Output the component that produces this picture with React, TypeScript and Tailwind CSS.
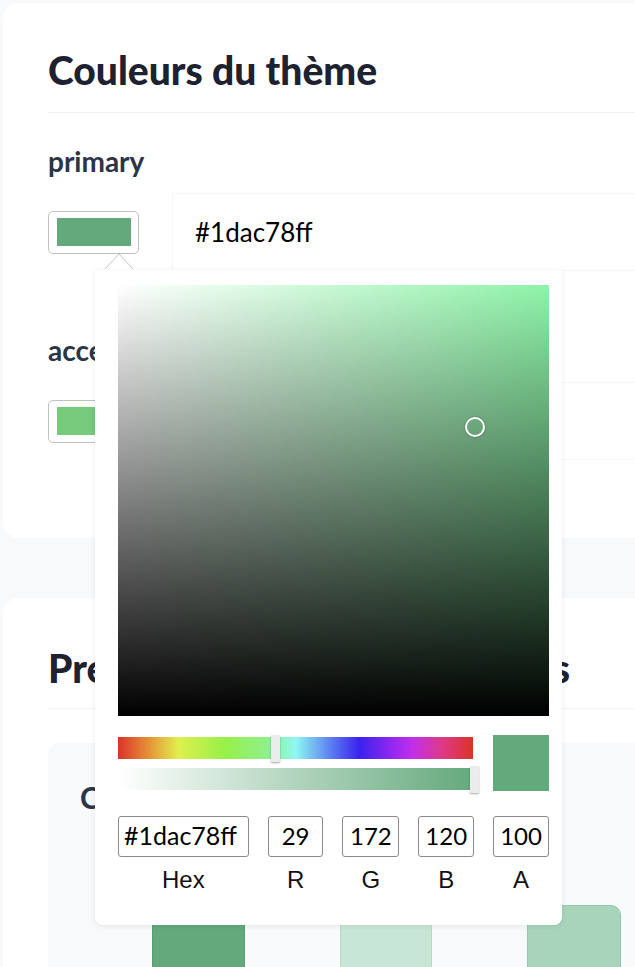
import React from "react"

const HUE =
  "linear-gradient(to right, #db3327 0%, #e6a13c 10%, #dff04e 17%, #98f048 30%, #8ef08c 42%, #8ff8f2 50%, #5a7ef0 60%, #3b22ee 68%, #9a28f0 78%, #c030e8 83%, #dd3a8c 91%, #db3327 100%)"

const Swatch = ({ color }: { color: string }) => (
  <button className="flex h-[43px] w-[91px] shrink-0 items-center justify-center rounded-[5px] border border-[#c0c0c0] bg-white">
    <span className="block h-[28px] w-[74px]" style={{ background: color }} />
  </button>
)

const ColorPicker = () => {
  const fields = [
    { v: "#1dac78ff", l: "Hex", w: "w-[131px]", a: "justify-start pl-[5px] text-[25px]" },
    { v: "29", l: "R", w: "w-[56px]", a: "justify-center text-[24px]" },
    { v: "172", l: "G", w: "w-[57px]", a: "justify-center text-[24px]" },
    { v: "120", l: "B", w: "w-[56px]", a: "justify-center text-[24px]" },
    { v: "100", l: "A", w: "w-[56px]", a: "justify-center text-[24px]" },
  ]
  return (
    <>
      {/* caret */}
      <svg className="absolute left-[57px] top-[42px] z-20" width="28" height="16" viewBox="0 0 28 16">
        <polyline points="0,16 14,1 28,16" fill="white" stroke="#c6c6c6" strokeWidth="1" />
      </svg>
      <div className="absolute left-[47px] top-[59px] z-10 flex h-[655px] w-[467px] flex-col rounded-b-lg bg-white pl-[23px] pr-[13px] pt-[15px] shadow-[0_1px_6px_rgba(0,0,0,0.08)]">
        <div className="relative h-[431px] w-[431px] bg-[linear-gradient(to_top,#000,transparent),linear-gradient(to_right,#fff,#8ef3a8)]">
          <span className="absolute left-[347px] top-[132px] h-[20px] w-[20px] rounded-full border-2 border-white shadow-[0_0_2px_rgba(0,0,0,0.45)]" />
        </div>
        <div className="mt-[19px] flex items-start gap-[20px]">
          <div className="flex w-[355px] flex-col gap-[9px] pt-[2px]">
            <div className="relative h-[22px]" style={{ background: HUE }}>
              <span className="absolute left-[153px] top-[-2px] h-[27px] w-[9px] rounded-[1px] bg-[#ececec] shadow-[0_1px_2px_rgba(0,0,0,0.35)]" />
            </div>
            <div className="relative h-[22px] bg-[linear-gradient(to_right,rgba(100,169,124,0),#64a97c)]">
              <span className="absolute left-[352px] top-[-2px] h-[27px] w-[9px] rounded-[1px] bg-[#ececec] shadow-[0_1px_2px_rgba(0,0,0,0.35)]" />
            </div>
          </div>
          <div className="h-[56px] w-[56px] bg-[#64a97c]" />
        </div>
        <div className="mt-[25px] flex gap-[19px]">
          {fields.map((f) => (
            <div key={f.l} className={`flex flex-col items-center ${f.w}`}>
              <div className={`flex h-[41px] w-full items-center rounded-[3px] border border-[#8a8a8a] text-black ${f.a}`}>
                {f.v}
              </div>
              <div className="mt-[9px] font-['Liberation_Sans',Arial,sans-serif] text-[24px] leading-[28px] text-[#111]">
                {f.l}
              </div>
            </div>
          ))}
        </div>
      </div>
    </>
  )
}

const Field = ({ name, color, value, open }: { name: string; color: string; value: string; open?: boolean }) => (
  <div className="flex flex-col">
    <div className="text-[28px] font-bold leading-[28px] text-[#2c3447]">{name}</div>
    <div className="mt-[18px] flex items-center gap-[33px]">
      <div className="relative">
        <Swatch color={color} />
        {open && <ColorPicker />}
      </div>
      <div className="flex h-[78px] flex-1 items-center border border-[#f5f6f8] bg-white pl-[22px] text-[26px] text-black">
        {value}
      </div>
    </div>
  </div>
)

export default function App() {
  return (
    <div className="h-screen w-[635px] overflow-hidden bg-[#f8f9fb] p-[3px] font-['Lato',sans-serif]">
      <section className="w-[720px] rounded-2xl bg-white pb-[78px] pl-[45px] pt-[45px]">
        <h2 className="text-[39px] font-black leading-[44px] text-[#1e2130]">Couleurs du thème</h2>
        <div className="mt-[20px] h-px bg-[#f2f3f5]" />
        <div className="mt-[34px] flex flex-col gap-[65px]">
          <Field name="primary" color="#64a97c" value="#1dac78ff" open />
          <Field name="accent" color="#77c97b" value="#22c55eff" />
        </div>
      </section>

      <section className="mt-[60px] w-[720px] rounded-2xl bg-white pl-[45px] pt-[48px]">
        <h2 className="flex w-[522px] justify-between text-[39px] font-black leading-[44px] text-[#1e2130]">
          <span>Prévisualisation</span>
          <span>des</span>
          <span>éléments</span>
        </h2>
        <div className="mt-[18px] h-px bg-[#f2f3f5]" />
        <div className="mt-[34px] rounded-xl bg-[#f8f9fb] pl-[32px] pt-[36px]">
          <h3 className="text-[30px] font-bold leading-[36px] text-[#2c3447]">Carte de statistiques</h3>
          <div className="mt-[24px] flex h-[220px] items-end gap-[95px] pl-[72px]">
            <div className="h-[190px] w-[93px] rounded-t-lg border border-[#5a9d70] bg-[#64a97c]" />
            <div className="h-[170px] w-[92px] rounded-t-lg border border-[#b6d9c5] bg-[#c8e6d6]" />
            <div className="h-[154px] w-[94px] rounded-t-[10px] border border-[#95c8ab] bg-[#a7d4bb]" />
          </div>
        </div>
      </section>
    </div>
  )
}
